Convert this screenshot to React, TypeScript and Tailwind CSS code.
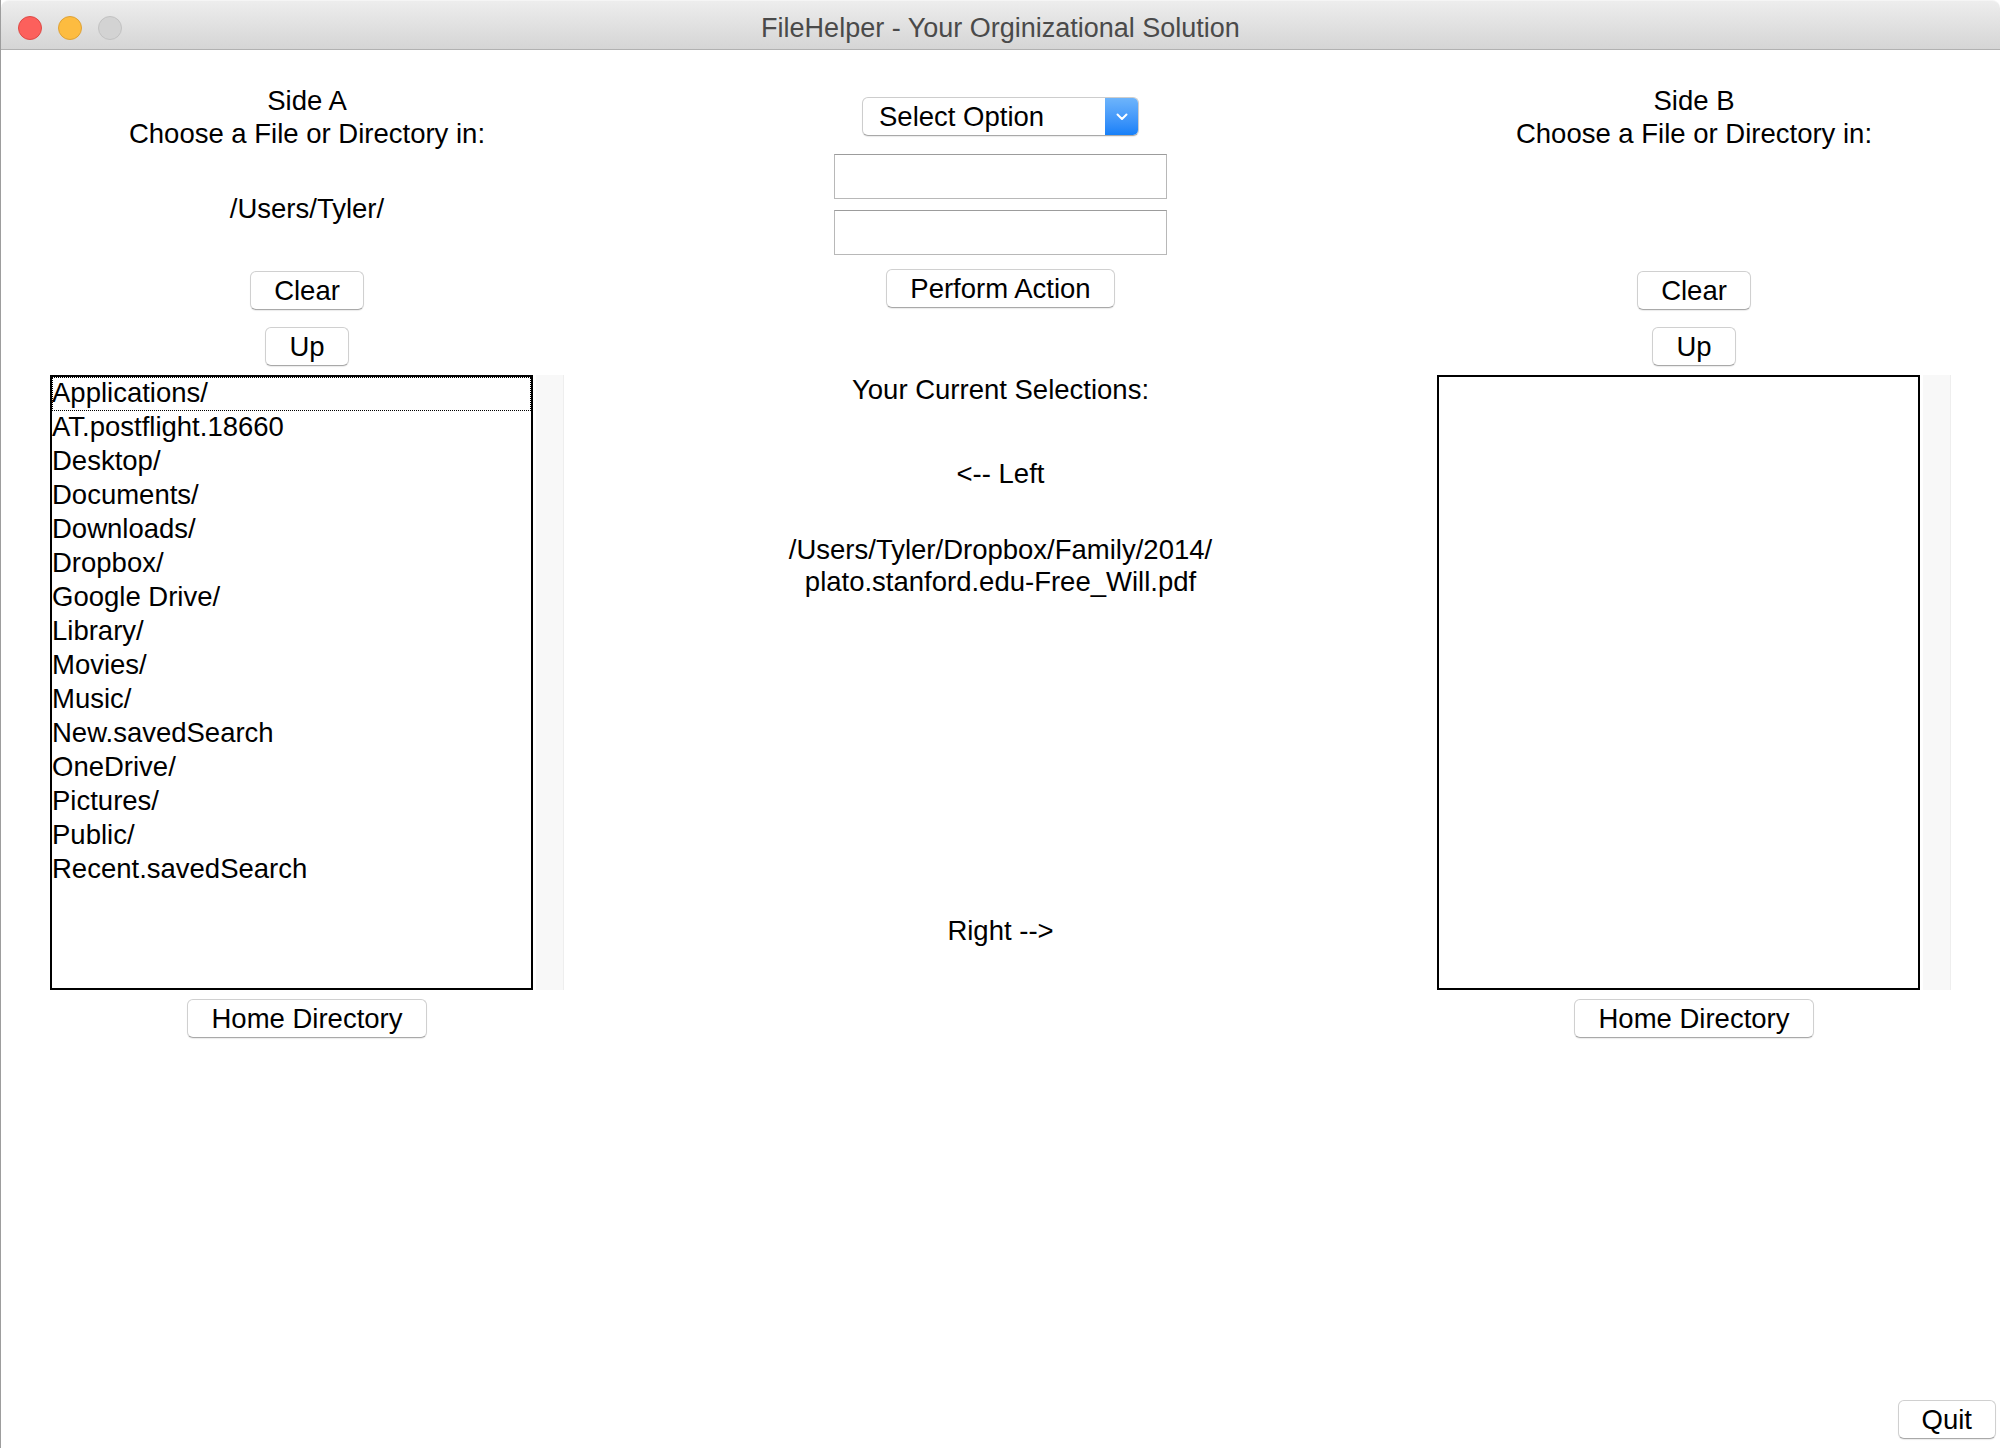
import React from "react";

const homeFiles = [
  "Applications/",
  "AT.postflight.18660",
  "Desktop/",
  "Documents/",
  "Downloads/",
  "Dropbox/",
  "Google Drive/",
  "Library/",
  "Movies/",
  "Music/",
  "New.savedSearch",
  "OneDrive/",
  "Pictures/",
  "Public/",
  "Recent.savedSearch",
];

const MacButton = ({ label, className = "" }: { label: string; className?: string }) => (
  <button
    className={
      "h-[39px] px-[23px] bg-white rounded-[6px] border border-[#d0d0d0] border-b-[#a9a9a9] shadow-[0_1px_1px_rgba(0,0,0,0.08)] leading-none text-black " +
      className
    }
  >
    {label}
  </button>
);

interface SidePanelProps {
  title: string;
  path: string;
  items: string[];
}

const SidePanel = ({ title, path, items }: SidePanelProps) => (
  <div className="w-[612px] flex flex-col items-center pt-[34px]">
    <div className="text-center leading-[33px]">
      <div>{title}</div>
      <div>Choose a File or Directory in:</div>
    </div>
    <div className="h-[33px] mt-[42px] leading-[33px]">{path}</div>
    <MacButton label="Clear" className="mt-[46px]" />
    <MacButton label="Up" className="mt-[17px]" />
    <div className="mt-[9px] flex">
      {/* list box */}
      <div className="w-[483px] h-[615px] border-2 border-black bg-white overflow-hidden">
        {items.map((f, i) => (
          <div
            key={f}
            className={
              "h-[34px] leading-[31px] whitespace-nowrap " +
              (i === 0 ? "outline-1 outline-dotted outline-black -outline-offset-1" : "")
            }
          >
            {f}
          </div>
        ))}
      </div>
      {/* scroll track */}
      <div className="w-[28px] ml-[3px] bg-[#f8f8f8] border-r border-[#eeeeee]" />
    </div>
    <MacButton label="Home Directory" className="mt-[9px]" />
  </div>
);

export default function App() {
  return (
    <div
      className="w-[2000px] h-[1448px] flex flex-col bg-white text-black text-[27.5px] border-l border-[#9d9d9d] overflow-hidden"
      style={{ fontFamily: '"Liberation Sans", Arial, sans-serif' }}
    >
      {/* Title bar */}
      <div className="h-[50px] pt-[6px] shrink-0 grid grid-cols-[1fr_auto_1fr] items-center bg-linear-to-b from-[#ededed] to-[#d5d5d5] border-b border-[#b1b1b1] border-t border-t-[#f5f5f5] rounded-t-[8px]">
        <div className="flex items-center gap-[16px] pl-[17px]">
          <span className="w-[24px] h-[24px] rounded-full bg-[#fc605c] border border-[#de4a46]" />
          <span className="w-[24px] h-[24px] rounded-full bg-[#fdbc40] border border-[#dea236]" />
          <span className="w-[24px] h-[24px] rounded-full bg-[#d3d3d3] border border-[#c2c2c2]" />
        </div>
        <div className="text-[27px] text-[#4a4a4a]">FileHelper - Your Orginizational Solution</div>
        <div />
      </div>

      {/* Body */}
      <div className="flex-1 flex">
        <SidePanel title="Side A" path="/Users/Tyler/" items={homeFiles} />

        <div className="flex-1 flex flex-col items-center pt-[47px]">
          {/* popup button */}
          <div className="w-[277px] h-[39px] flex rounded-[6px] border border-[#cdcdcd] border-b-[#a9a9a9] bg-white shadow-[0_1px_1px_rgba(0,0,0,0.08)] overflow-hidden">
            <div className="flex-1 pl-[16px] leading-[37px]">Select Option</div>
            <div className="w-[33px] bg-linear-to-b from-[#6db4fb] to-[#1580f8] flex items-center justify-center">
              <svg width="12" height="8" viewBox="0 0 12 8" fill="none">
                <path d="M1.5 1.5 L6 6 L10.5 1.5" stroke="white" strokeWidth="2" strokeLinecap="round" strokeLinejoin="round" />
              </svg>
            </div>
          </div>
          <input className="mt-[18px] w-[333px] h-[45px] border border-[#b8b8b8] border-t-[#9c9c9c] bg-white outline-none" />
          <input className="mt-[11px] w-[333px] h-[45px] border border-[#b8b8b8] border-t-[#9c9c9c] bg-white outline-none" />
          <MacButton label="Perform Action" className="mt-[14px]" />

          <div className="mt-[65px] leading-[33px]">Your Current Selections:</div>
          <div className="mt-[51px] leading-[33px]">&lt;-- Left</div>
          <div className="mt-[44px] leading-[32px] text-center">
            <div>/Users/Tyler/Dropbox/Family/2014/</div>
            <div>plato.stanford.edu-Free_Will.pdf</div>
          </div>
          <div className="mt-[316px] leading-[33px]">Right --&gt;</div>
        </div>

        <SidePanel title="Side B" path="" items={[]} />
      </div>

      {/* Footer */}
      <div className="flex justify-end pr-[4px] pb-[9px]">
        <MacButton label="Quit" />
      </div>
    </div>
  );
}
